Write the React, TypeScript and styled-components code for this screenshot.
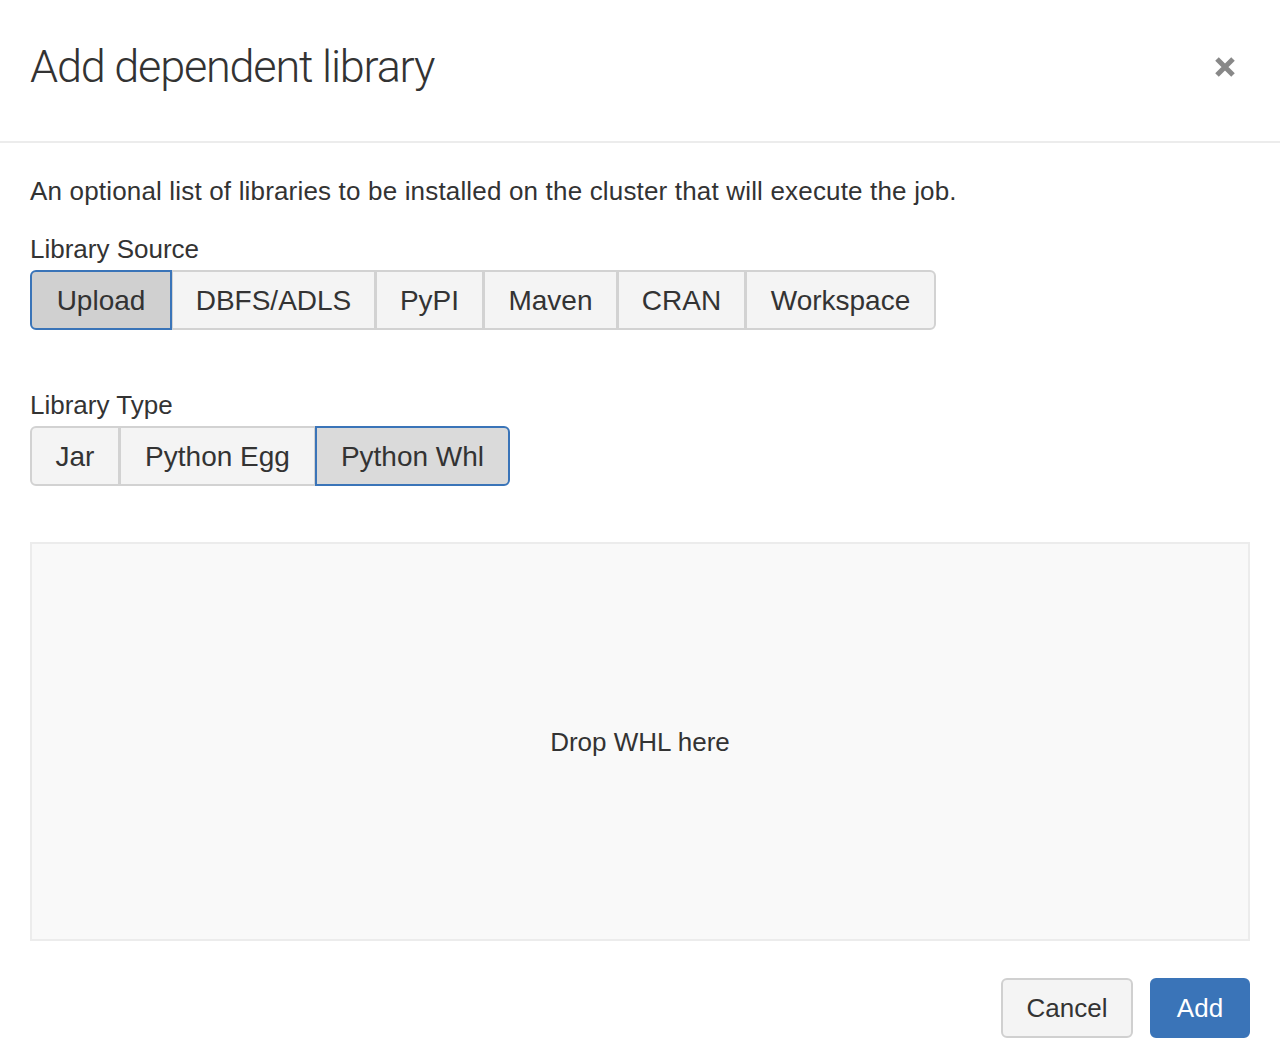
import React, { useState } from "react";
import styled, { createGlobalStyle } from "styled-components";

const Global = createGlobalStyle`
  html, body { margin: 0; padding: 0; background: #fff; }
  body { font-family: "Liberation Sans", Arial, sans-serif; color: #333; }
  * { box-sizing: border-box; }
`;

const Modal = styled.div`
  width: 1280px;
  height: 1060px;
  background: #fff;
  display: flex;
  flex-direction: column;
`;

const Header = styled.div`
  height: 143px;
  border-bottom: 2px solid #ececec;
  display: flex;
  align-items: center;
  justify-content: space-between;
  padding: 0 42px 8px 30px;
`;

const Title = styled.h1`
  margin: 0;
  font-family: "Roboto", "Liberation Sans", sans-serif;
  font-weight: 300;
  font-size: 45px;
  letter-spacing: -1.2px;
  color: #333;
`;

const Close = styled.button`
  border: 0;
  background: none;
  padding: 0;
  width: 26px;
  height: 26px;
  cursor: pointer;
  display: flex;
  align-items: center;
  justify-content: center;
`;

const Body = styled.div`
  flex: 1;
  padding: 33px 30px 0 30px;
  display: flex;
  flex-direction: column;
`;

const Intro = styled.p`
  margin: 0;
  font-size: 26px;
  letter-spacing: 0.17px;
  line-height: 30px;
  color: #333;
`;

const Label = styled.div<{ $top: number }>`
  margin-top: ${(p) => p.$top}px;
  font-size: 26px;
  line-height: 30px;
  color: #333;
`;

const Group = styled.div`
  display: flex;
  margin-top: 6px;
`;

const Seg = styled.button<{ $active: boolean; $w: number; $pressed?: boolean }>`
  width: ${(p) => p.$w}px;
  height: 60px;
  margin-left: -1px;
  font-family: "Liberation Sans", Arial, sans-serif;
  font-size: 28px;
  color: #333;
  background: ${(p) => (p.$active ? (p.$pressed ? "#d0d0d0" : "#dadada") : "#f4f4f4")};
  border: 2px solid ${(p) => (p.$active ? "#3a74b8" : "#d2d2d2")};
  position: relative;
  z-index: ${(p) => (p.$active ? 1 : 0)};
  padding: 1px 0 0 0;
  cursor: pointer;
  &:first-child { margin-left: 0; border-radius: 6px 0 0 6px; }
  &:last-child { border-radius: 0 6px 6px 0; }
`;

const Drop = styled.div`
  margin-top: 56px;
  height: 399px;
  background: #f9f9f9;
  border: 2px solid #ececec;
  display: flex;
  align-items: center;
  justify-content: center;
  font-size: 26px;
  padding-top: 2px;
  color: #333;
`;

const Footer = styled.div`
  display: flex;
  justify-content: flex-end;
  gap: 17px;
  padding: 36px 30px 0 30px;
  height: 118px;
`;

const Btn = styled.button<{ $primary?: boolean; $w: number }>`
  width: ${(p) => p.$w}px;
  height: 60px;
  border-radius: 6px;
  font-family: "Liberation Sans", Arial, sans-serif;
  font-size: 26px;
  cursor: pointer;
  background: ${(p) => (p.$primary ? "#3a74b8" : "#f4f4f4")};
  color: ${(p) => (p.$primary ? "#fff" : "#333")};
  border: 2px solid ${(p) => (p.$primary ? "#3a74b8" : "#d0d0d0")};
`;

const sources: [string, number][] = [
  ["Upload", 142],
  ["DBFS/ADLS", 205],
  ["PyPI", 109],
  ["Maven", 135],
  ["CRAN", 129],
  ["Workspace", 191],
];

const types: [string, number][] = [
  ["Jar", 90],
  ["Python Egg", 197],
  ["Python Whl", 195],
];

export default function App() {
  const [src, setSrc] = useState("Upload");
  const [typ, setTyp] = useState("Python Whl");
  return (
    <>
      <Global />
      <Modal>
        <Header>
          <Title>Add dependent library</Title>
          <Close aria-label="Close">
            <svg width="22" height="22" viewBox="0 0 22 22">
              <path d="M3 3 L19 19 M19 3 L3 19" stroke="#888" strokeWidth="5" strokeLinecap="butt" />
            </svg>
          </Close>
        </Header>
        <Body>
          <Intro>An optional list of libraries to be installed on the cluster that will execute the job.</Intro>
          <Label $top={28}>Library Source</Label>
          <Group>
            {sources.map(([s, w]) => (
              <Seg key={s} $w={w} $active={src === s} $pressed onClick={() => setSrc(s)}>
                {s}
              </Seg>
            ))}
          </Group>
          <Label $top={60}>Library Type</Label>
          <Group>
            {types.map(([t, w]) => (
              <Seg key={t} $w={w} $active={typ === t} onClick={() => setTyp(t)}>
                {t}
              </Seg>
            ))}
          </Group>
          <Drop>Drop WHL here</Drop>
        </Body>
        <Footer>
          <Btn $w={132}>Cancel</Btn>
          <Btn $w={100} $primary>Add</Btn>
        </Footer>
      </Modal>
    </>
  );
}
